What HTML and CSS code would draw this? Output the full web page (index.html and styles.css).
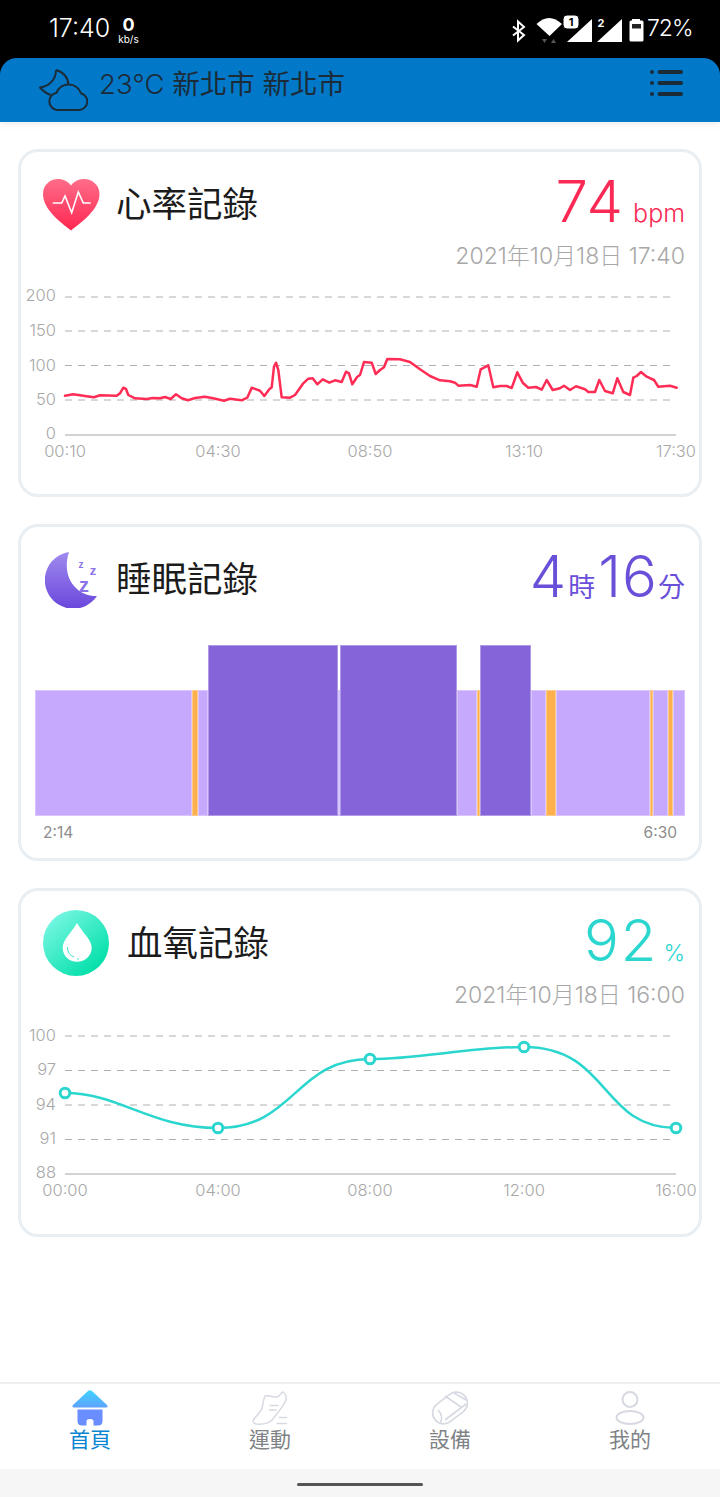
FILE: index.html
```html
<!DOCTYPE html>
<html>
<head>
    <title>健康記錄</title>
    <link rel="stylesheet" href="styles.css">
</head>
<body>
<div class="app">
    <div class="top">
        <div class="status">
            <span class="clock">17:40</span>
            <span class="speed"><b>0</b><small>kb/s</small></span>
            <svg class="status-icons" width="134" height="32" viewBox="511 13 134 32">
                <path d="M513 24.500 L524 33 L518 38.500 V19.500 L524 25 L513 33.500" fill="none" stroke="#fff" stroke-width="2"/>
                <path d="M536.500 22 Q549 10 562 22 L549.500 34 Z" fill="#fff"/>
                <path d="M542 37 h5 l-2.500 4 Z" fill="#555"/>
                <path d="M551 41 h5 l-2.500 -4 Z" fill="#555"/>
                <path d="M567 40 L592 17 V40 Z" fill="#fff"/>
                <path d="M597 40 L622 17 V40 Z" fill="#fff"/>
                <rect x="563" y="13" width="16" height="14" rx="4" fill="#fff" stroke="#000" stroke-width="1"/>
                <text x="571" y="24" class="sim-dark">1</text>
                <text x="601" y="25" class="sim-light">2</text>
                <path d="M632 18.500 V17 H640 V18.500 H642 Q643.500 18.500 643.500 20 V38 Q643.500 39.500 642 39.500 H631 Q629.500 39.500 629.500 38 V20 Q629.500 18.500 631 18.500 Z" fill="#fff"/>
                <rect x="632" y="22" width="9" height="4.500" fill="#222"/>
            </svg>
            <span class="battery">72%</span>
        </div>
        <div class="header">
            <svg class="weather" width="50" height="44" viewBox="38 62 50 44">
                <path d="M56 64 C56 73 50 80 40 81.500 C43 85 47 88 51 89 M56 64 C63 66 68 71 68.500 79" fill="none" stroke="#1c2b38" stroke-width="2" stroke-linejoin="round"/>
                <path d="M57 104 H79 A8.500 8.500 0 0 0 81 87.300 A13 13 0 0 0 56.500 86.800 A8.700 8.700 0 0 0 57 104 Z" fill="#0179c8" stroke="#1c2b38" stroke-width="2"/>
            </svg>
            <span class="place"><span class="temp">23°C</span> 新北市 新北市</span>
            <svg class="menu" width="34" height="28" viewBox="0 0 34 28">
                <circle cx="3" cy="3" r="2" fill="#1c2b38"/>
                <circle cx="3" cy="14" r="2" fill="#1c2b38"/>
                <circle cx="3" cy="25" r="2" fill="#1c2b38"/>
                <path d="M10.500 3 H32 M10.500 14 H32 M10.500 25 H32" stroke="#1c2b38" stroke-width="4" stroke-linecap="round"/>
            </svg>
        </div>
    </div>

    <div class="main">
        <div class="card card-heart">
            <div class="card-head">
                <div class="icon-box">
                    <svg width="58" height="53" viewBox="42 177 58 53">
                        <defs>
                            <linearGradient id="heartFill" x1="0" y1="0" x2="0" y2="1">
                                <stop offset="0" stop-color="#ff6d88"/>
                                <stop offset="1" stop-color="#ff2752"/>
                            </linearGradient>
                        </defs>
                        <path d="M71 229.500 C60 221 43 208 43 193 C43 184 50 178 58 178 C63.500 178 68 180.500 71 184.500 C74 180.500 78.500 178 84 178 C92 178 99.500 184 99.500 193 C99.500 208 82 221 71 229.500 Z" fill="url(#heartFill)"/>
                        <polyline points="52.700,202 61.700,202 65,195 71.700,211.700 78.300,191 83.300,202 90.700,202" fill="none" stroke="#fff" stroke-width="1.600"/>
                    </svg>
                </div>
                <span class="title">心率記錄</span>
                <span class="value value-heart"><b>74</b><small class="unit-gap">bpm</small></span>
            </div>
            <div class="date">2021年10月18日 17:40</div>
            <svg class="chart" width="678" height="195" viewBox="21 275 678 195">
                <path class="grid" d="M65 297 H672 M65 331 H672 M65 365.500 H672 M65 400 H672"/>
                <path class="base" d="M65 435 H676"/>
                <text class="y-label" x="56" y="301">200</text>
                <text class="y-label" x="56" y="336">150</text>
                <text class="y-label" x="56" y="371">100</text>
                <text class="y-label" x="56" y="405">50</text>
                <text class="y-label" x="56" y="439">0</text>
                <text class="x-label" x="65" y="457">00:10</text>
                <text class="x-label" x="218" y="457">04:30</text>
                <text class="x-label" x="370" y="457">08:50</text>
                <text class="x-label" x="524" y="457">13:10</text>
                <text class="x-label" x="676" y="457">17:30</text>
                <polyline class="heart-line" points="65,395.700 73.300,394.300 85,396 94,397.300 100,395.300 116.700,395.700 120,393.300 123.300,387.700 126,389 128.300,395 135,398.300 146.700,399 153,398 160,398.300 165,397 170.700,399 176,394.300 181.700,398.300 188,400.300 195,398 205,396.700 213.300,398.300 224,400.700 230,398.700 241.700,400.300 247.300,397.700 251.700,387.700 260,390.700 264.300,396 269.300,389.300 271.700,387.300 274,366.700 276,362.700 278.300,370 281.700,397.300 290,397.700 295,395 303.300,383.300 308.300,378.700 312.700,378.300 317.300,384.300 322.700,379.300 329.300,382.700 335,380.300 341.700,382 346,371.700 349,373.300 352.300,384.300 357.300,376.700 360,375 364,362 371.700,362.700 375.700,374 380,370 384,367.300 387.300,359 400,359.300 410,362 420,369.300 430,376 440,380.300 450,381.300 455,382.700 458.300,385.700 470,385 476.700,386.700 480.700,369.300 488.300,365.300 493.300,387.300 500,386 506.700,386 511.700,388 517.300,372.300 522.700,382.700 528.300,387.700 536,387 541.700,389.700 546.700,380 552.700,390 560,388.300 564,385.700 570,390 576,386.300 585,389.300 588.300,392 595,392 599.300,380 605,391 612.700,393.300 617.300,378.300 623.300,392 630,395 633.300,377.700 636.700,376 641,372 646.700,376.700 654,380 658.300,386.700 670,385.700 676.700,387.700"/>
            </svg>
        </div>

        <div class="card card-sleep">
            <div class="card-head">
                <div class="icon-box">
                    <svg class="moon" width="54" height="58" viewBox="45 550 54 58">
                        <defs>
                            <linearGradient id="moonFill" x1="0" y1="0" x2="0" y2="1">
                                <stop offset="0" stop-color="#a08aee"/>
                                <stop offset="1" stop-color="#6a48dc"/>
                            </linearGradient>
                        </defs>
                        <path d="M69 552 A28.500 28.500 0 1 0 97 596 C80 597 60 580 69 552 Z" fill="url(#moonFill)"/>
                        <text class="zee" x="81" y="568" font-size="10">z</text>
                        <text class="zee" x="93" y="575" font-size="13">z</text>
                        <text class="zee" x="84" y="592" font-size="20">z</text>
                    </svg>
                </div>
                <span class="title">睡眠記錄</span>
                <span class="value value-sleep"><b>4</b><small class="sleep-unit">時</small><b class="sleep-num">16</b><small class="sleep-unit">分</small></span>
            </div>
            <div class="bars">
                <div class="seg light" style="width:157px"></div>
                <div class="seg awake" style="width:6px"></div>
                <div class="seg light" style="width:10px"></div>
                <div class="seg deep" style="width:130px"></div>
                <div class="seg light" style="width:2px"></div>
                <div class="seg deep" style="width:117px"></div>
                <div class="seg light" style="width:20px"></div>
                <div class="seg awake" style="width:3px"></div>
                <div class="seg deep" style="width:51px"></div>
                <div class="seg light" style="width:15px"></div>
                <div class="seg awake" style="width:10px"></div>
                <div class="seg light" style="width:94px"></div>
                <div class="seg awake" style="width:3px"></div>
                <div class="seg light" style="width:15px"></div>
                <div class="seg awake" style="width:5px"></div>
                <div class="seg light" style="width:12px"></div>
            </div>
            <div class="bar-times"><span>2:14</span><span>6:30</span></div>
        </div>

        <div class="card card-oxygen">
            <div class="card-head">
                <div class="icon-box icon-box-wide">
                    <svg width="68" height="68" viewBox="42 909 68 68">
                        <defs>
                            <linearGradient id="dropFill" x1="0.15" y1="0.1" x2="0.85" y2="0.9">
                                <stop offset="0" stop-color="#74f6e2"/>
                                <stop offset="1" stop-color="#00dfa8"/>
                            </linearGradient>
                        </defs>
                        <circle cx="76" cy="943" r="33" fill="url(#dropFill)"/>
                        <path d="M77 923 C72 932 62.700 940 62.700 947.500 C62.700 956 69 961.700 77 961.700 C85 961.700 91.700 956 91.700 947.500 C91.700 940 82 932 77 923 Z" fill="#fff"/>
                        <path d="M67.500 947 C67.500 952 70 955.500 74 957" fill="none" stroke="#2fe0bf" stroke-width="1"/>
                        <circle cx="78" cy="959" r="0.800" fill="#2fe0bf"/>
                    </svg>
                </div>
                <span class="title">血氧記錄</span>
                <span class="value value-oxygen"><b>92</b><small class="percent">%</small></span>
            </div>
            <div class="date">2021年10月18日 16:00</div>
            <svg class="chart" width="678" height="195" viewBox="21 1014 678 195">
                <path class="grid" d="M65 1036 H672 M65 1070.500 H672 M65 1105 H672 M65 1139.500 H672"/>
                <path class="base" d="M65 1174 H676"/>
                <text class="y-label" x="56" y="1041">100</text>
                <text class="y-label" x="56" y="1075">97</text>
                <text class="y-label" x="56" y="1110">94</text>
                <text class="y-label" x="56" y="1144">91</text>
                <text class="y-label" x="56" y="1178">88</text>
                <text class="x-label" x="65" y="1196">00:00</text>
                <text class="x-label" x="218" y="1196">04:00</text>
                <text class="x-label" x="370" y="1196">08:00</text>
                <text class="x-label" x="524" y="1196">12:00</text>
                <text class="x-label" x="676" y="1196">16:00</text>
                <path class="oxygen-line" d="M65 1093 C120 1093 150 1128 218 1128 C295 1128 295 1059 370 1059 C420 1059 470 1047 524 1047 C610 1047 600 1128 676 1128"/>
                <circle class="dot" cx="65" cy="1093" r="4.800"/>
                <circle class="dot" cx="218" cy="1128" r="4.800"/>
                <circle class="dot" cx="370" cy="1059" r="4.800"/>
                <circle class="dot" cx="524" cy="1047" r="4.800"/>
                <circle class="dot" cx="676" cy="1128" r="4.800"/>
            </svg>
        </div>
    </div>

    <div class="tabs">
        <div class="tab active">
            <svg width="38" height="36" viewBox="71 1390 38 36">
                <defs>
                    <linearGradient id="roofFill" x1="0" y1="0" x2="0" y2="1">
                        <stop offset="0" stop-color="#3fd4ff"/>
                        <stop offset="1" stop-color="#5fa2ff"/>
                    </linearGradient>
                </defs>
                <path d="M88 1391 Q90 1389.500 92 1391 L107 1405 Q108.500 1407.500 106 1407.500 H74 Q71.500 1407.500 73 1405 Z" fill="url(#roofFill)"/>
                <path d="M77.500 1409.500 H102.500 V1421 Q102.500 1425.500 98 1425.500 H93.500 V1421 Q93.500 1419 90 1419 Q86.500 1419 86.500 1421 V1425.500 H82 Q77.500 1425.500 77.500 1421 Z" fill="#6a8dff"/>
            </svg>
            <span>首頁</span>
        </div>
        <div class="tab">
            <svg width="38" height="36" viewBox="251 1390 38 36" fill="none" stroke="#d6d9e1" stroke-width="1.500" stroke-linecap="round" stroke-linejoin="round">
                <path d="M265 1396 C269 1395 274 1397.500 277 1397 C280 1396.500 281 1392 283 1392 C286 1394 287 1398 285.500 1401 C282 1408 277 1414 272 1420 C268 1424 262 1424.500 256 1424 C253 1423.500 252.500 1421 254 1419 C257 1415 261 1412 262 1408 C263 1404 263.500 1399 265 1396 Z"/>
                <path d="M270 1405.500 H278 M269.500 1410 H276 M279.500 1417.500 H286.500 M277 1423.500 H286.500"/>
            </svg>
            <span>運動</span>
        </div>
        <div class="tab">
            <svg width="38" height="36" viewBox="431 1390 38 36" fill="none" stroke="#d6d9e1" stroke-width="1.600">
                <rect x="431" y="1397" width="38" height="22" rx="11" transform="rotate(-37 450 1408)"/>
                <path d="M445 1396 L461 1407 M454 1393 L466 1400 M438 1410 C443 1415 442 1420 440 1424 M445 1420 L466 1404"/>
            </svg>
            <span>設備</span>
        </div>
        <div class="tab">
            <svg width="38" height="36" viewBox="611 1390 38 36" fill="none" stroke="#d6d9e1" stroke-width="2">
                <circle cx="630" cy="1399.500" r="7.500"/>
                <ellipse cx="630" cy="1417.500" rx="13.500" ry="6.500"/>
            </svg>
            <span>我的</span>
        </div>
    </div>
    <div class="nav-bar"><div class="nav-pill"></div></div>
</div>
</body>
</html>
```

FILE: styles.css
```css
* {
    box-sizing: border-box;
}

body {
    margin: 0;
    background-color: #fff;
    font-family: Inter, "Noto Sans CJK TC", sans-serif;
    font-weight: 300;
}

.app {
    display: flex;
    flex-direction: column;
    width: 720px;
    height: 1497px;
    overflow: hidden;
}

/* status bar + blue header */
.top {
    background-color: #000;
    box-shadow: 0 2px 8px rgba(0, 0, 0, 0.08);
}

.status {
    display: flex;
    align-items: center;
    height: 58px;
    padding-left: 49px;
    color: #fff;
}

.clock {
    font-size: 25px;
    padding-bottom: 2px;
}

.speed {
    display: flex;
    flex-direction: column;
    align-items: center;
    margin-left: 8px;
    padding-top: 2px;
}

.speed b {
    font-size: 18px;
    font-weight: 700;
    line-height: 18px;
}

.speed small {
    font-size: 10px;
    font-weight: 400;
    line-height: 10px;
}

.status-icons {
    display: block;
    margin-left: auto;
    margin-top: 3px;
}

.sim-dark, .sim-light {
    font-size: 11px;
    font-weight: 700;
    text-anchor: middle;
}

.sim-dark {
    fill: #000;
}

.sim-light {
    fill: #fff;
}

.battery {
    width: 75px;
    padding-left: 2px;
    font-size: 23px;
    letter-spacing: -1px;
    padding-bottom: 2px;
}

.header {
    display: flex;
    align-items: center;
    height: 64px;
    padding: 0 37px 0 38px;
    background-color: #0179c8;
    border-radius: 17px 17px 0 0;
    color: #1c2b38;
}

.weather {
    display: block;
}

.place {
    margin-left: 11px;
    font-size: 27.500px;
    font-weight: 400;
    padding-bottom: 16px;
}

.temp {
    font-weight: 300;
}

.menu {
    display: block;
    margin-left: auto;
    margin-bottom: 14px;
}

/* cards */
.main {
    flex: 1;
    padding: 27px 18px 0;
}

.card {
    margin-bottom: 27px;
    padding: 22px 14px 0;
    background-color: #fff;
    border: 3px solid #e9eef2;
    border-radius: 20px;
}

.card-heart {
    height: 348px;
}

.card-sleep {
    height: 337px;
}

.card-oxygen {
    height: 349px;
}

.card-head {
    display: flex;
    align-items: center;
    height: 60px;
}

.icon-box {
    display: flex;
    width: 74px;
    margin-left: 7px;
    flex: none;
}

.icon-box-wide {
    width: 85px;
}

.moon {
    margin-left: 3px;
}

.zee {
    fill: #8a73ea;
    font-family: "Liberation Sans", sans-serif;
    font-weight: 700;
    text-anchor: middle;
}

.title {
    font-size: 35.500px;
    font-weight: 400;
    color: #1c1c1c;
    white-space: nowrap;
    padding-bottom: 6px;
}

.value {
    display: flex;
    align-items: baseline;
    margin-left: auto;
    padding-bottom: 6px;
    white-space: nowrap;
}

.value b {
    font-size: 58px;
    font-weight: 300;
    line-height: 56px;
    letter-spacing: 2px;
}

.value small {
    font-size: 25px;
}

.unit-gap {
    margin-left: 8px;
}

.value small.percent {
    margin-left: 5px;
    font-size: 23px;
}

.value small.sleep-unit {
    font-size: 27px;
    font-weight: 400;
}

.value b.sleep-num {
    margin-left: 3px;
    letter-spacing: 1px;
}

.value-heart {
    color: #fb2a55;
}

.value-sleep {
    color: #6a4fd8;
}

.value-oxygen {
    color: #2bd6cf;
}

.date {
    margin-top: 7px;
    height: 30px;
    line-height: 30px;
    text-align: right;
    font-size: 23px;
    color: #a8a8a8;
}

/* line charts */
.chart {
    display: block;
    margin: 4px -14px 0;
}

.grid {
    fill: none;
    stroke: #b0b0b0;
    stroke-width: 1;
    stroke-dasharray: 7 6;
}

.base {
    fill: none;
    stroke: #c4c4c4;
    stroke-width: 1.500;
}

.y-label, .x-label {
    fill: #a8a8a8;
    font-size: 16.500px;
}

.y-label {
    text-anchor: end;
}

.x-label {
    text-anchor: middle;
}

.heart-line {
    fill: none;
    stroke: #ff2d55;
    stroke-width: 2.500;
    stroke-linejoin: round;
    stroke-linecap: round;
}

.oxygen-line {
    fill: none;
    stroke: #2bd6cf;
    stroke-width: 2.500;
}

.dot {
    fill: #fff;
    stroke: #2bd6cf;
    stroke-width: 3;
}

/* sleep bars */
.bars {
    display: flex;
    align-items: flex-end;
    height: 171px;
    margin-top: 36px;
}

.seg {
    flex: none;
    height: 126px;
    border: 1px solid rgba(255, 255, 255, 0.35);
}

.light {
    background-color: #c6a8fd;
}

.deep {
    height: 171px;
    background-color: #8464d8;
}

.awake {
    background-color: #fdb04c;
}

.bar-times {
    display: flex;
    justify-content: space-between;
    padding: 7px 8px 0;
    font-size: 15.500px;
    font-weight: 400;
    color: #8c8c8c;
}

/* bottom tabs */
.tabs {
    display: flex;
    height: 87px;
    border-top: 2px solid #eee;
    background-color: #fff;
}

.tab {
    display: flex;
    flex-direction: column;
    align-items: center;
    flex: 1;
    padding-top: 6px;
    font-size: 21px;
    font-weight: 400;
    color: #7f8387;
}

.tab svg {
    display: block;
}

.tab span {
    line-height: 28px;
}

.tab.active {
    color: #0a85d1;
}

.nav-bar {
    display: flex;
    justify-content: center;
    height: 28px;
    padding-top: 14px;
    background-color: #f6f6f6;
}

.nav-pill {
    width: 126px;
    height: 3px;
    border-radius: 2px;
    background-color: #555;
}
```
